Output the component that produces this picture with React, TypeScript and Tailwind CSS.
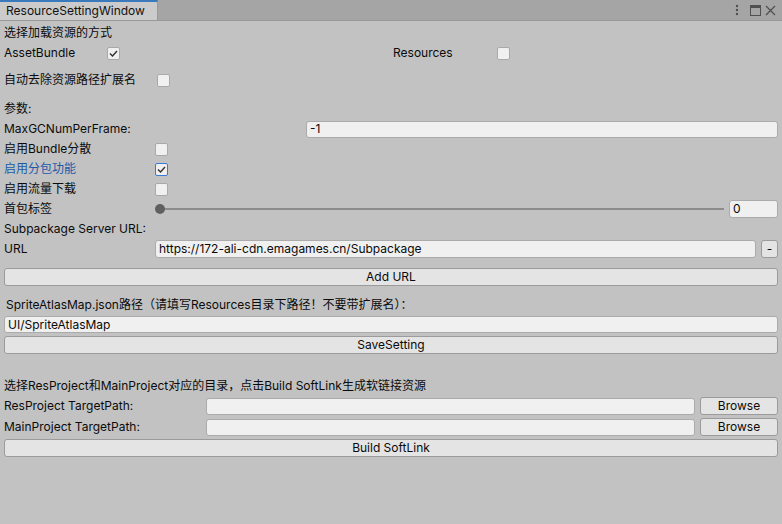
const font = { fontFamily: 'Inter, "Noto Sans CJK SC", sans-serif' };

function Check({ checked, focus }: { checked?: boolean; focus?: boolean }) {
  return (
    <div
      className={
        "w-[13px] h-[13px] rounded-[2px] bg-[#f0f0f0] flex items-center justify-center border " +
        (focus ? "border-[#3a79d6]" : "border-[#a9a9a9]")
      }
    >
      {checked && (
        <svg width="9" height="9" viewBox="0 0 9 9">
          <path d="M1 4.5 L3.5 7 L8 2" fill="none" stroke="#303030" strokeWidth="1.4" />
        </svg>
      )}
    </div>
  );
}

function Field({ value, className }: { value?: string; className?: string }) {
  return (
    <div
      className={
        "h-[17px] bg-[#f0f0f0] border border-[#ababab] rounded-[3px] flex items-center px-[3px] text-[12px] text-[#0a0a0a] overflow-hidden " +
        (className ?? "")
      }
    >
      {value}
    </div>
  );
}

function Button({ label, className }: { label: string; className?: string }) {
  return (
    <div
      className={
        "h-[18px] bg-[#e4e4e4] border border-[#9b9b9b] rounded-[3px] flex items-center justify-center text-[12px] text-[#0a0a0a] " +
        (className ?? "")
      }
    >
      {label}
    </div>
  );
}

function Row({ children, className }: { children: React.ReactNode; className?: string }) {
  return <div className={"h-[20px] flex items-center " + (className ?? "")}>{children}</div>;
}

export default function App() {
  return (
    <div className="w-[782px] h-[524px] bg-[#c2c2c2] flex flex-col text-[12px] text-[#0b0b0b]" style={font}>
      {/* tab bar */}
      <div className="h-[21px] bg-[#a5a5a5] border-b border-[#999] flex items-stretch shrink-0">
        <div className="w-[158px] bg-[#cbcbcb] border-t-2 border-[#3a79bb] border-r border-r-[#999] flex items-center pl-[6px] text-[12px] text-[#111]">
          ResourceSettingWindow
        </div>
        <div className="flex-1" />
        <div className="flex items-center pr-[6px]">
          <svg width="4" height="12" viewBox="0 0 4 12" className="mr-[11px]">
            <circle cx="2" cy="2" r="1.2" fill="#505050" />
            <circle cx="2" cy="6" r="1.2" fill="#505050" />
            <circle cx="2" cy="10" r="1.2" fill="#505050" />
          </svg>
          <svg width="11" height="11" viewBox="0 0 11 11" className="mr-[4px]">
            <rect x="0.5" y="0.5" width="10" height="10" fill="none" stroke="#505050" />
            <rect x="0.5" y="0.5" width="10" height="2.5" fill="#505050" />
          </svg>
          <svg width="11" height="11" viewBox="0 0 11 11">
            <path d="M1 1 L10 10 M10 1 L1 10" stroke="#505050" strokeWidth="1.3" />
          </svg>
        </div>
      </div>

      <div className="flex flex-col pl-[4px] pr-[4px]">
        <Row className="mt-[2px]">选择加载资源的方式</Row>
        <Row>
          <div className="w-[103px]">AssetBundle</div>
          <Check checked />
          <div className="w-[273px]" />
          <div className="w-[104px]">Resources</div>
          <Check />
        </Row>
        <Row className="mt-[7px]">
          <div className="w-[153px]">自动去除资源路径扩展名</div>
          <Check />
        </Row>
        <Row className="mt-[9px] h-[19px]">参数:</Row>
        <Row>
          <div className="w-[302px]">MaxGCNumPerFrame:</div>
          <Field value="-1" className="flex-1" />
        </Row>
        <Row>
          <div className="w-[151px]">启用Bundle分散</div>
          <Check />
        </Row>
        <Row>
          <div className="w-[151px] text-[#1b5aa8]">启用分包功能</div>
          <Check checked focus />
        </Row>
        <Row>
          <div className="w-[151px]">启用流量下载</div>
          <Check />
        </Row>
        <Row>
          <div className="w-[151px]">首包标签</div>
          <div className="flex-1 relative h-[20px] flex items-center mr-[5px]">
            <div className="w-full h-[2px] bg-[#8c8c8c]" />
            <div className="absolute left-0 top-[5px] w-[10px] h-[10px] rounded-full bg-[#606060]" />
          </div>
          <Field value="0" className="w-[49px] h-[18px]" />
        </Row>
        <Row>Subpackage Server URL:</Row>
        <Row>
          <div className="w-[151px]">URL</div>
          <Field value="https://172-ali-cdn.emagames.cn/Subpackage" className="flex-1 h-[18px]" />
          <Button label="-" className="w-[17px] ml-[5px] h-[17px]" />
        </Row>
        <Button label="Add URL" className="mt-[9px]" />
        <Row className="pl-[2px] mt-[9px]">SpriteAtlasMap.json路径（请填写Resources目录下路径！不要带扩展名）：</Row>
        <Field value="UI/SpriteAtlasMap" className="mt-[1px]" />
        <Button label="SaveSetting" className="mt-[3px]" />
        <Row className="mt-[22px]">选择ResProject和MainProject对应的目录，点击Build SoftLink生成软链接资源</Row>
        <Row>
          <div className="w-[202px]">ResProject TargetPath:</div>
          <Field className="flex-1 h-[16px]" />
          <Button label="Browse" className="w-[78px] ml-[5px] h-[17px]" />
        </Row>
        <Row className="mt-[1px]">
          <div className="w-[202px]">MainProject TargetPath:</div>
          <Field className="flex-1 h-[16px]" />
          <Button label="Browse" className="w-[78px] ml-[5px] h-[17px]" />
        </Row>
        <Button label="Build SoftLink" className="mt-[2px]" />
      </div>
    </div>
  );
}
